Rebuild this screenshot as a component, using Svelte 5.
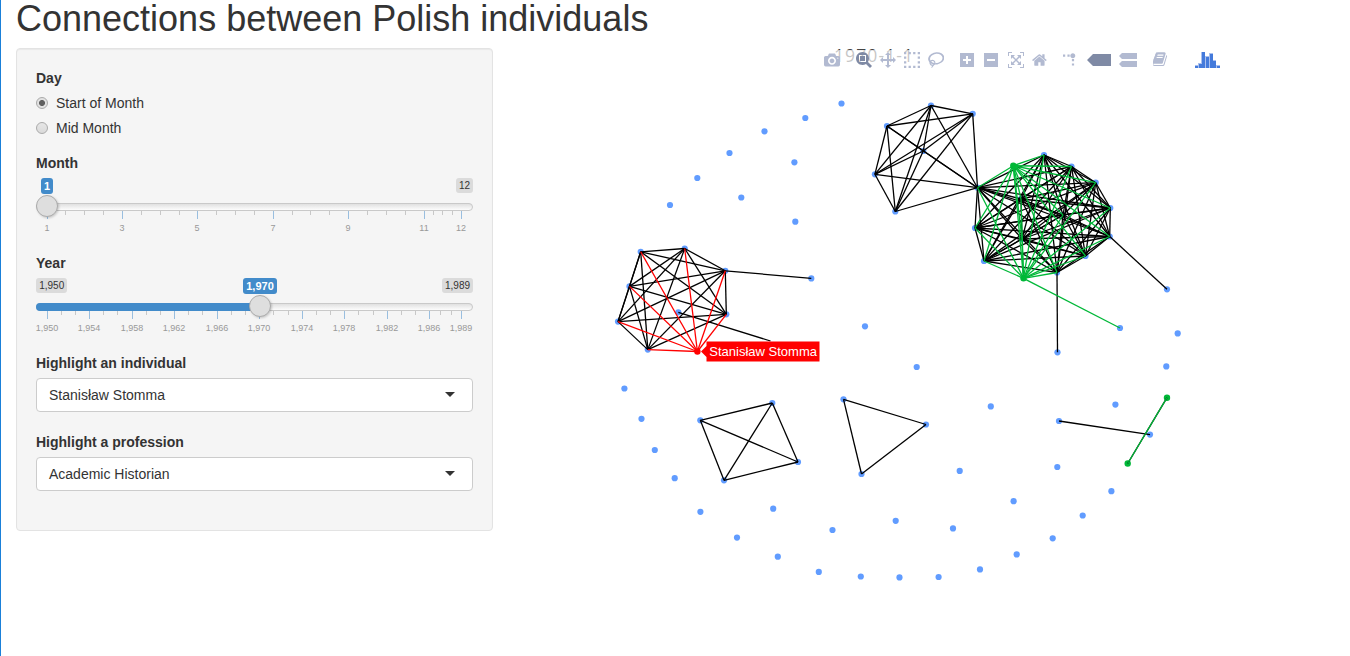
<script>
  const BLUE = '#619cff';
  const GREEN = '#00b838';

  const monthSlider = {
    label: 'Month', min: '', max: '12', value: '1', valueX: 11, valueW: 12, from: false,
    major: [[11, '1'], [86, '3'], [161, '5'], [237, '7'], [312, '9'], [388, '11'], [425, '12']],
    minor: [29, 48, 67, 105, 124, 143, 180, 199, 218, 256, 274, 293, 331, 350, 369, 397, 406, 416]
  };
  const yearSlider = {
    label: 'Year', min: '1,950', max: '1,989', value: '1,970', valueX: 224, valueW: 34, from: true,
    major: [[11, '1,950'], [53, '1,954'], [96, '1,958'], [138, '1,962'], [181, '1,966'], [223, '1,970'], [266, '1,974'], [308, '1,978'], [351, '1,982'], [393, '1,986'], [425, '1,989']],
    minor: [25, 39, 67, 81, 110, 124, 152, 166, 195, 209, 237, 252, 280, 294, 322, 337, 365, 379, 404, 415]
  };
  const sliders = [monthSlider, yearSlider];
  const selects = [
    { label: 'Highlight an individual', value: 'Stanisław Stomma' },
    { label: 'Highlight a profession', value: 'Academic Historian' }
  ];

  function complete(nodes) {
    const out = [];
    for (let i = 0; i < nodes.length; i++)
      for (let j = i + 1; j < nodes.length; j++) out.push([nodes[i], nodes[j]]);
    return out;
  }
  function fan(node, nodes) {
    return nodes.map((n) => [node, n]);
  }

  const hub = [977.5, 187.7];
  const top = [[931, 105.5], [972.7, 113.8], [887, 126], [923.3, 151], [874.9, 174.3], [895.3, 211.5]];
  const right = [[1044, 155], [1071.5, 166.5], [1095.7, 182.7], [1110.3, 208], [1109.7, 236.5], [1085.5, 256], [1057, 272.5], [984, 261], [975, 228], [1021, 199], [1063, 215], [1022, 239]];
  const greenA = [1013.3, 165.7];
  const greenB = [1023.5, 278.3];
  const left = [[640.7, 251.8], [684.7, 248.5], [725.3, 270.8], [726.3, 314.3], [647.8, 349.6], [618, 321.6], [629.5, 286.4]];
  const chosen = [697.4, 351.5];
  const square = [[700.3, 420.3], [772.3, 403], [798, 462], [724, 480.3]];
  const triangle = [[843.5, 399.3], [926, 424.5], [861.5, 474]];
  const pairs = [
    [[1109.7, 236.5], [1167, 289.3]], [[1057, 272.5], [1057.5, 352.3]],
    [[1059, 421], [1150, 434.6]], [[725.3, 270.8], [811.3, 278.4]],
    [[678.3, 312.3], [770.5, 341]], [[1167, 397.7], [1127.7, 463.5]]
  ];
  const blackEdges = [
    ...complete([...top, hub]), ...complete([...right, hub]),
    ...complete(left), ...complete(square), ...complete(triangle), ...pairs
  ];
  const greenEdges = [
    ...fan(greenA, [hub, ...right, greenB]), ...fan(greenB, [hub, ...right]),
    [greenB, [1120, 328]], [[1167, 397.7], [1127.7, 463.5]]
  ];
  const redEdges = fan(chosen, left);
  const singles = [
    [841.5, 103.5], [805.3, 118], [764.5, 131.3], [729.5, 153], [794.4, 162.3], [697.3, 178], [741.3, 197.5], [670, 205], [795.3, 221.7],
    [865, 326.3], [916.7, 367], [624.4, 388.5], [641.5, 418.8], [654.8, 450], [674.7, 478.2], [700.4, 511.8], [773.2, 508.7], [737, 537.6],
    [777.8, 556.7], [832.5, 530], [895.7, 520.8], [818.8, 571.9], [860.8, 576.5], [899.5, 577.4], [938.6, 577], [980, 569.4], [953, 528.4],
    [959.7, 470.9], [990.8, 406.4], [1013.6, 501.2], [1016.7, 554.4], [1052.7, 538.3], [1082.7, 515.5], [1111.4, 491.2], [1057.3, 467],
    [1115.4, 404.6], [1166.3, 366.4], [1177.7, 333.4], [1120, 328], [1167, 289.3], [1057.5, 352.3], [1059, 421], [1150, 434.6],
    [811.3, 278.4], [678.3, 312.3]
  ];
  const blueNodes = [...singles, ...top, hub, ...right, ...left, ...square, ...triangle];
  const greenNodes = [greenA, greenB, [1167, 397.7], [1127.7, 463.5]];

  const layers = [
    { color: '#000', edges: blackEdges },
    { color: GREEN, edges: greenEdges },
    { color: 'red', edges: redEdges }
  ];

  const groups = [
    [{ w: 1000, d: 'm500 450c-83 0-150-67-150-150 0-83 67-150 150-150 83 0 150 67 150 150 0 83-67 150-150 150z m400 150h-120c-16 0-34 13-39 29l-31 93c-6 15-23 28-40 28h-340c-16 0-34-13-39-28l-31-94c-6-15-23-28-40-28h-120c-55 0-100-45-100-100v-450c0-55 45-100 100-100h800c55 0 100 45 100 100v450c0 55-45 100-100 100z m-400-550c-138 0-250 112-250 250 0 138 112 250 250 250 138 0 250-112 250-250 0-138-112-250-250-250z m365 380c-19 0-35 16-35 35 0 19 16 35 35 35 19 0 35-16 35-35 0-19-16-35-35-35z' }],
    [
      { w: 1000, active: true, d: 'm1000-25l-250 251c40 63 63 138 63 218 0 224-182 406-407 406-224 0-406-182-406-406s183-406 407-406c80 0 155 22 218 62l250-250 125 125z m-812 250l0 438 437 0 0-438-437 0z m62 375l313 0 0-312-313 0 0 312z' },
      { w: 1000, d: 'm1000 350l-187 188 0-125-250 0 0 250 125 0-188 187-187-187 125 0 0-250-250 0 0 125-188-188 186-187 0 125 252 0 0-250-125 0 187-188 188 188-125 0 0 250 250 0 0-126 187 188z' },
      { w: 1000, d: 'm0 850l0-143 143 0 0 143-143 0z m286 0l0-143 143 0 0 143-143 0z m285 0l0-143 143 0 0 143-143 0z m286 0l0-143 143 0 0 143-143 0z m-857-286l0-143 143 0 0 143-143 0z m857 0l0-143 143 0 0 143-143 0z m-857-285l0-143 143 0 0 143-143 0z m857 0l0-143 143 0 0 143-143 0z m-857-286l0-143 143 0 0 143-143 0z m286 0l0-143 143 0 0 143-143 0z m285 0l0-143 143 0 0 143-143 0z m286 0l0-143 143 0 0 143-143 0z' },
      { w: 1031, d: 'm1018 538c-36 207-290 336-568 286-277-48-473-256-436-463 10-57 36-108 76-151-13-66 11-137 68-183 34-28 75-41 114-42l-55-70 0 0c-2-1-3-2-4-3-10-14-8-34 5-45 14-11 34-8 45 4 1 1 2 3 2 5l0 0 113 140c16 11 31 24 45 40 4 3 6 7 8 11 48-3 100 0 151 9 278 48 473 255 436 462z m-624-379c-80 14-149 48-197 96 42 42 109 47 156 9 33-26 47-66 41-105z m-187-74c-19 16-33 37-39 60 50-32 109-55 174-68-42-25-95-24-135 8z m360 75c-34-7-69-9-102-8 8 62-16 128-68 170-73 59-175 54-244-5-9 20-16 40-20 61-28 159 121 317 333 354s407-60 434-217c28-159-121-318-333-355z' }
    ],
    [
      { w: 1000, d: 'm1 787l0-875 875 0 0 875-875 0z m687-500l-187 0 0-187-125 0 0 187-188 0 0 125 188 0 0 187 125 0 0-187 187 0 0-125z' },
      { w: 1000, d: 'm0 788l0-876 876 0 0 876-876 0z m688-500l-500 0 0 125 500 0 0-125z' },
      { w: 1000, d: 'm250 850l-187 0-63 0 0-62 0-188 63 0 0 188 187 0 0 62z m688 0l-188 0 0-62 188 0 0-188 62 0 0 188 0 62-62 0z m-875-938l0 188-63 0 0-188 0-62 63 0 187 0 0 62-187 0z m875 188l0-188-188 0 0-62 188 0 62 0 0 62 0 188-62 0z m-125 188l-1 0-93-94-156 156 156 156 92-93 2 0 0 250-250 0 0-2 93-92-156-156-156 156 94 92 0 2-250 0 0-250 0 0 93 93 157-156-157-156-93 94 0 0 0-250 250 0 0 0-94 93 156 157 156-157-93-93 0 0 250 0 0 250z' },
      { w: 928.6, d: 'm786 296v-267q0-15-11-26t-25-10h-214v214h-143v-214h-214q-15 0-25 10t-11 26v267q0 1 0 2t0 2l321 264 321-264q1-1 1-4z m124 39l-34-41q-5-5-12-6h-2q-7 0-12 3l-386 322-386-322q-7-4-13-4-7 2-12 7l-35 41q-4 5-3 13t6 12l401 334q18 15 42 15t43-15l136-114v109q0 8 5 13t13 5h107q8 0 13-5t5-13v-227l122-102q5-5 6-12t-4-13z' }
    ],
    [
      { w: 1000, t: 'matrix(1.5 0 0 -1.5 0 850)', d: 'M512 409c0-57-46-104-103-104-57 0-104 47-104 104 0 57 47 103 104 103 57 0 103-46 103-103z m-327-39l92 0 0 92-92 0z m-185 0l92 0 0 92-92 0z m370-186l92 0 0 93-92 0z m0-184l92 0 0 92-92 0z' },
      { w: 1500, active: true, d: 'm375 725l0 0-375-375 375-374 0-1 1125 0 0 750-1125 0z' },
      { w: 1125, d: 'm187 786l0 2-187-188 188-187 0 0 937 0 0 373-938 0z m0-499l0 1-187-188 188-188 0 0 937 0 0 376-938-1z' }
    ],
    [{ w: 1000, t: 'matrix(.56 0 0 .56 -54 -52)', d: 'M1639 478q40 57 18 129l-275 906q-19 64-76.5 107.5t-122.5 43.5h-923q-77 0-148.5-53.5t-99.5-131.5q-24-67-2-127 0-4 3-27t4-37q1-8-3-21.5t-3-19.5q2-11 8-21t16.5-23.5 16.5-23.5q23-38 45-91.5t30-91.5q3-10 .5-30t-.5-28q3-11 17-28t17-23q21-36 42-92t25-90q1-9-2.500-32t.5-28q4-13 22-30.500t22-22.500q19-26 42.500-84.500t27.500-96.500q1-8-3-25.500t-2-26.500q2-8 9-18t18-23 17-21q8-12 16.500-30.500t15-35 16-36 19.500-32 26.500-23.500 36-11.500 47.500 5.500l-1 3q38-9 51-9h761q74 0 114 56t18 130l-274 906q-36 119-71.500 153.500t-128.500 34.500h-869q-27 0-38 15-11 16-1 43 24 70 144 70h923q29 0 56-15.500t35-41.500l300-987q7-22 5-57 38 15 59 43zm-1064 2q-4 13 2 22.500t20 9.500h608q13 0 25.500-9.500t16.500-22.500l21-64q4-13-2-22.500t-20-9.500h-608q-13 0-25.500 9.500t-16.500 22.500zm-83 256q-4 13 2 22.500t20 9.500h608q13 0 25.500-9.500t16.500-22.500l21-64q4-13-2-22.500t-20-9.500h-608q-13 0-25.500 9.500t-16.500 22.500z' }]
  ];
  // x, top, width of the histogram logo bars; a pale edge sits left of and above each
  const bars = [[0, 14, 3], [4, 12, 3], [7, 0, 3], [11, 5, 3], [15, 2, 3], [18, 9, 3], [22, 14, 3]];
</script>

<div class="page">
  <h2>Connections between Polish individuals</h2>
  <div class="row">
    <form class="well">
      <div class="group">
        <span class="label">Day</span>
        <div class="radio"><i class="dot on"></i>Start of Month</div>
        <div class="radio"><i class="dot"></i>Mid Month</div>
      </div>
      {#each sliders as s}
        <div class="group">
          <span class="label">{s.label}</span>
          <svg class="slider" width="437" height="60" viewBox="0 0 437 60">
            <defs>
              <linearGradient id="track" x2="0" y2="1"><stop stop-color="#dedede" /><stop offset="1" stop-color="#fff" /></linearGradient>
            </defs>
            {#if s.min}
              <rect width="31" height="15" rx="3" fill="#dbdbdb" /><text class="lim" x="15.700" y="11">{s.min}</text>
              <rect x="406" width="31" height="15" rx="3" fill="#dbdbdb" /><text class="lim" x="421.500" y="11">{s.max}</text>
            {:else}
              <rect x="420" width="17" height="15" rx="3" fill="#dbdbdb" /><text class="lim" x="428.500" y="11">{s.max}</text>
            {/if}
            {#each s.minor as x}<rect {x} y="33" width="1" height="4" fill="#c8c8c8" />{/each}
            {#each s.major as [x, t]}
              <rect {x} y="33" width="1" height="8" fill="#99bedf" />
              <text class="tick" {x} y="53">{t}</text>
            {/each}
            <rect x=".5" y="25.500" width="436" height="7" rx="3.500" fill="url(#track)" stroke="#c9c9c9" />
            {#if s.from}<path d="M224 25H4a4 4 0 0 0 0 8H224z" fill="#428bca" />{/if}
            <rect x={s.valueX - s.valueW / 2} width={s.valueW} height="16" rx="3" fill="#428bca" />
            <text class="val" x={s.valueX} y="12">{s.value}</text>
            <circle class="knob" cx={s.valueX} cy="28" r="10.500" />
          </svg>
        </div>
      {/each}
      {#each selects as s}
        <div class="group pick">
          <span class="label">{s.label}</span>
          <div class="select"><span>{s.value}</span><i class="caret"></i></div>
        </div>
      {/each}
    </form>

    <main class="plot">
      <svg width="812" height="600" viewBox="523 48 812 600">
        <text class="date" x="834" y="61.500" textLength="79">1970-1-1</text>
        {#each blueNodes as [x, y]}<circle cx={x} cy={y} r="3.100" fill={BLUE} />{/each}
        {#each greenNodes as [x, y]}<circle cx={x} cy={y} r="3.200" fill={GREEN} />{/each}
        <circle cx={chosen[0]} cy={chosen[1]} r="3.200" fill="red" />
        {#each layers as layer}
          <g stroke={layer.color} stroke-width="1.300">
            {#each layer.edges as [a, b]}<line x1={a[0]} y1={a[1]} x2={b[0]} y2={b[1]} />{/each}
          </g>
        {/each}
        <path d="M701 351.500L706.500 346V341.500H819.500V361.500H706.500V357z" fill="red" />
        <text class="hover" x="709.300" y="356">Stanisław Stomma</text>
      </svg>
      <div class="modebar">
        {#each groups as g}
          <div class="tools">
            {#each g as icon}
              <svg class:active={icon.active} width={icon.w * 0.016} height="16" viewBox="0 0 {icon.w} 1000">
                <path transform={icon.t ?? 'matrix(1 0 0 -1 0 850)'} d={icon.d} />
              </svg>
            {/each}
          </div>
        {/each}
        <svg class="logo" width="25" height="16" viewBox="0 0 25 16" shape-rendering="crispEdges">
          {#each bars as [x, y, w]}<rect x={x - 1} y={y - 1} width={w + 1} height={17 - y} fill="#a9c0ef" />{/each}
          {#each bars as [x, y, w]}<rect {x} {y} width={w} height={16 - y} fill="#447adb" />{/each}
        </svg>
      </div>
    </main>
  </div>
</div>

<style>
  :global(body) { background: #fff; }
  .page {
    box-sizing: border-box;
    height: 656px;
    overflow: hidden;
    border-left: 1px solid #1a80d9;
    padding-left: 15px;
    font: 14px/20px "Liberation Sans", Arial, sans-serif;
    color: #333;
  }
  h2 { margin: 0 0 11px; font-size: 36px; font-weight: 400; line-height: 37px; height: 37px; white-space: nowrap; }
  .row { display: flex; gap: 30px; }
  .well {
    box-sizing: border-box;
    width: 477px;
    height: 483px;
    padding: 19px;
    background: #f5f5f5;
    border: 1px solid #e3e3e3;
    border-radius: 4px;
    box-shadow: inset 0 1px 1px rgba(0, 0, 0, .05);
  }
  .group { margin-bottom: 15px; }
  .pick { margin-bottom: 20px; }
  .label { display: block; margin-bottom: 5px; font-weight: 700; }
  .radio { display: flex; align-items: center; gap: 8px; height: 20px; margin-bottom: 5px; }
  .group .radio:last-child { margin-bottom: 0; }
  .dot {
    box-sizing: border-box;
    width: 12px;
    height: 12px;
    border: 1px solid #aaa;
    border-radius: 50%;
    background: linear-gradient(#e6e6e6, #dadada);
  }
  .dot.on { background: radial-gradient(circle, #606060 0 2.600px, #e2e2e2 3.400px); }
  .slider { display: block; overflow: visible; }
  text { text-anchor: middle; }
  .lim { font-size: 10px; fill: #333; }
  .tick { font-size: 9px; fill: #999; }
  .val { font-size: 11px; font-weight: 700; fill: #fff; }
  .knob { fill: #dedede; stroke: #ababab; filter: drop-shadow(1px 1px 1px rgba(0, 0, 0, .2)); }
  .select {
    box-sizing: border-box;
    display: flex;
    align-items: center;
    justify-content: space-between;
    height: 34px;
    padding: 0 17px 0 12px;
    background: #fff;
    border: 1px solid #ccc;
    border-radius: 4px;
  }
  .caret { border: 5px solid transparent; border-top-color: #333; border-bottom: 0; margin-top: -1px; }
  .plot { position: relative; width: 812px; height: 600px; }
  .plot > svg { display: block; }
  .date { font: 17.500px "Open Sans", sans-serif; fill: #444; text-anchor: start; }
  .hover { font-size: 13px; fill: #fff; text-anchor: start; }
  .modebar {
    position: absolute;
    top: 2px;
    left: 297px;
    display: flex;
    align-items: center;
    gap: 8px;
    height: 20px;
    padding: 0 4px;
    background: rgba(255, 255, 255, .7);
  }
  .tools { display: flex; gap: 8px; padding-right: 8px; }
  .tools svg { display: block; fill: #b2bad1; }
  .tools svg.active { fill: #7f8aa5; }
  .logo { margin-left: 10px; }
</style>
